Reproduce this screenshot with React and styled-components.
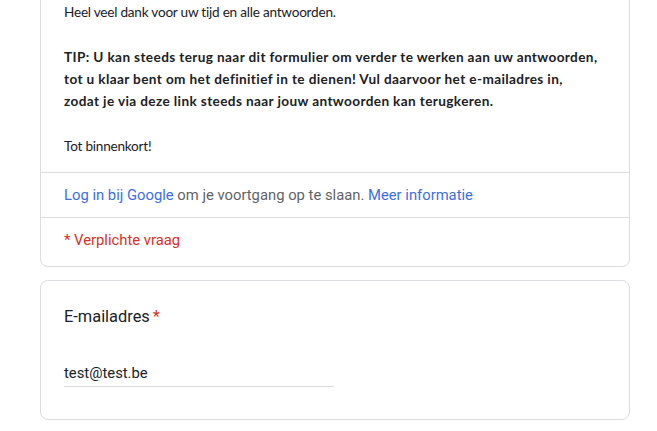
import React from 'react';
import styled, { createGlobalStyle } from 'styled-components';

const GlobalStyle = createGlobalStyle`
  html, body {
    margin: 0;
    padding: 0;
    background: #fff;
  }
  body {
    font-family: Roboto, "Liberation Sans", Arial, sans-serif;
    color: #202124;
  }
`;

const Page = styled.main`
  display: flex;
  flex-direction: column;
  gap: 13px;
  width: 590px;
  margin-left: 40px;
`;

const Card = styled.section`
  background: #fff;
  border: 1px solid #dadce0;
  border-radius: 8px;
  margin-top: ${(p) => (p.$cut ? '-25px' : '0')};
`;

const Description = styled.div`
  padding: 25px 23px 15px;
  font-family: Lato, Carlito, "Open Sans", sans-serif;
  font-size: 13.6px;
  line-height: 22.3px;
  letter-spacing: -0.23px;
  color: #202124;
  white-space: nowrap;

  p {
    margin: 0;
  }
  b {
    font-weight: 700;
    letter-spacing: 0.38px;
  }
`;

const Row = styled.div`
  border-top: 1px solid #dadce0;
  padding: ${(p) => (p.$last ? '12px 23px 16px' : '12px 23px')};
  font-size: 14.8px;
  line-height: 20px;
  color: ${(p) => (p.$danger ? '#d93025' : '#5f6368')};
`;

const Link = styled.a`
  color: #3d6ee6;
  text-decoration: none;
`;

const Question = styled.div`
  padding: 24px 23px 32px;
`;

const Label = styled.div`
  font-size: 16.4px;
  line-height: 24px;
  color: #202124;

  span {
    color: #d93025;
    margin-left: 3px;
  }
`;

const Input = styled.div`
  margin-top: 33px;
  width: 270px;
  font-size: 14.8px;
  line-height: 22px;
  padding-bottom: 2px;
  border-bottom: 1px solid #dadce0;
  color: #202124;
`;

export default function App() {
  return (
    <>
      <GlobalStyle />
      <Page>
        <Card $cut>
          <Description>
            <p>Heel veel dank voor uw tijd en alle antwoorden.</p>
            <p>&nbsp;</p>
            <p>
              <b>
                TIP: U kan steeds terug naar dit formulier om verder te werken aan uw antwoorden,
                <br />
                tot u klaar bent om het definitief in te dienen! Vul daarvoor het e-mailadres in,
                <br />
                zodat je via deze link steeds naar jouw antwoorden kan terugkeren.
              </b>
            </p>
            <p>&nbsp;</p>
            <p>Tot binnenkort!</p>
          </Description>
          <Row>
            <Link href="#">Log in bij Google</Link> om je voortgang op te slaan.{' '}
            <Link href="#">Meer informatie</Link>
          </Row>
          <Row $danger $last>* Verplichte vraag</Row>
        </Card>
        <Card>
          <Question>
            <Label>
              E-mailadres<span>*</span>
            </Label>
            <Input>test@test.be</Input>
          </Question>
        </Card>
      </Page>
    </>
  );
}
